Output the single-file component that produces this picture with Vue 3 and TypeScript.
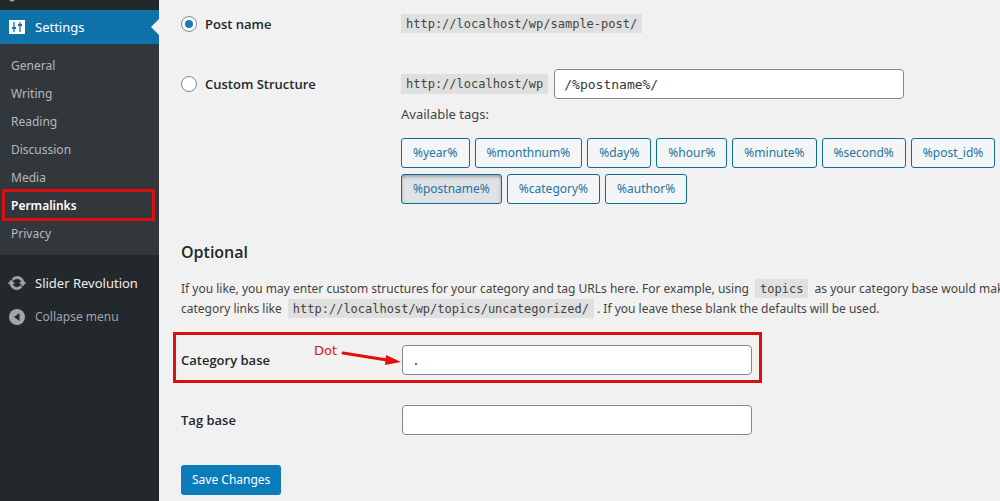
<script setup lang="ts">
import { ref } from 'vue'

const menu = ['General', 'Writing', 'Reading', 'Discussion', 'Media', 'Permalinks', 'Privacy']
const current = 'Permalinks'

const tagRows = [
  ['%year%', '%monthnum%', '%day%', '%hour%', '%minute%', '%second%', '%post_id%'],
  ['%postname%', '%category%', '%author%'],
]

const selection = ref('postname')
const structure = ref('/%postname%/')
const categoryBase = ref('.')
const tagBase = ref('')
</script>

<template>
  <div class="admin">
    <nav class="sidebar">
      <div class="tools">
        <svg width="6" height="3" viewBox="0 0 6 3"><path d="M0 0h6L4 1.500H2z" fill="#a0a5aa" /></svg>
      </div>
      <a class="top active" href="#">
        <svg class="icon" width="18" height="18" viewBox="0 0 18 18">
          <path d="M1 2h16v14H1z" fill="#fff" />
          <path d="M6 4v10M12 4v10" stroke="#1073aa" stroke-width="1.3" />
          <path d="M4 10h4M10 7h4" stroke="#1073aa" stroke-width="2.2" />
        </svg>
        <span>Settings</span>
      </a>
      <ul class="submenu">
        <li v-for="item in menu" :key="item" :class="{ current: item === current }">
          <a href="#">{{ item }}</a>
        </li>
      </ul>
      <a class="top slider" href="#">
        <svg class="icon" width="18" height="18" viewBox="1 1 18 18">
          <path
            d="M10.2 3.28c3.53 0 6.43 2.61 6.92 6h2.08l-3.5 4-3.5-4h2.32c-.45-1.97-2.21-3.45-4.32-3.45-1.45 0-2.73.71-3.54 1.78L4.95 5.66C6.23 4.2 8.11 3.28 10.2 3.28zm-.4 13.44c-3.52 0-6.43-2.61-6.92-6H.8l3.5-4 3.5 4H5.48c.45 1.97 2.21 3.45 4.32 3.45 1.45 0 2.73-.71 3.54-1.78l1.71 1.95c-1.28 1.46-3.15 2.38-5.25 2.38z"
            fill="#a0a5aa"
            stroke="#a0a5aa"
            stroke-width=".4"
          />
        </svg>
        <span>Slider Revolution</span>
      </a>
      <button class="top collapse" type="button">
        <svg class="icon" width="18" height="18" viewBox="0 0 18 18">
          <circle cx="9" cy="9" r="8" fill="#a0a5aa" />
          <path d="M11.500 5v8L6 9z" fill="#23282d" />
        </svg>
        <span>Collapse menu</span>
      </button>
    </nav>

    <main class="content">
      <form @submit.prevent>
        <div class="row">
          <label class="choice"><input v-model="selection" type="radio" name="structure" value="postname" />Post name</label>
          <div><code>http://localhost/wp/sample-post/</code></div>
        </div>
        <div class="row custom">
          <label class="choice"><input v-model="selection" type="radio" name="structure" value="custom" />Custom Structure</label>
          <div class="structure">
            <code>http://localhost/wp</code>
            <input v-model="structure" class="field" type="text" aria-label="Custom structure" />
          </div>
        </div>
        <div class="row">
          <div></div>
          <div class="tags">
            <p>Available tags:</p>
            <div v-for="(row, i) in tagRows" :key="i" class="tag-row">
              <button v-for="tag in row" :key="tag" type="button" class="tag" :class="{ pressed: structure.includes(tag) }">{{ tag }}</button>
            </div>
          </div>
        </div>

        <h2>Optional</h2>
        <p class="intro">
          If you like, you may enter custom structures for your category and tag URLs here. For example, using <code>topics</code> as your category base would make your<br />category links like <code>http://localhost/wp/topics/uncategorized/</code>. If you leave these blank the defaults will be used.
        </p>

        <div class="row base">
          <label for="category-base">Category base</label>
          <input id="category-base" v-model="categoryBase" class="field" type="text" />
          <div class="highlight"></div>
          <div class="note">
            <span>Dot</span>
            <svg width="62" height="28" viewBox="0 0 62 28">
              <path d="M3 12L47 19" stroke="#e01010" stroke-width="3" stroke-linecap="round" />
              <path d="M46 14L61 21L45 24z" fill="#e80c0c" />
            </svg>
          </div>
        </div>
        <div class="row base">
          <label for="tag-base">Tag base</label>
          <input id="tag-base" v-model="tagBase" class="field" type="text" />
        </div>
        <button class="save" type="submit">Save Changes</button>
      </form>
    </main>
  </div>
</template>

<style>
body {
  margin: 0;
  background: #f1f1f1;
}
</style>

<style scoped>
.admin {
  display: flex;
  height: 100vh;
  overflow: hidden;
  background: #f1f1f1;
  color: #444;
  font: 12px/20px "Noto Sans", "Open Sans", sans-serif;
}
.sidebar {
  flex: 0 0 159px;
  background: #23282d;
}
.tools {
  height: 10px;
  padding-left: 9px;
}
.tools svg {
  display: block;
}
.top {
  position: relative;
  display: flex;
  align-items: center;
  gap: 9px;
  box-sizing: border-box;
  width: 100%;
  height: 34px;
  padding: 0 8px;
  border: 0;
  background: none;
  color: #eee;
  font: 13px/20px "Noto Sans", "Open Sans", sans-serif;
  text-decoration: none;
  white-space: nowrap;
}
.icon {
  flex: none;
  overflow: visible;
}
.active {
  background: #0f73aa;
  color: #fff;
}
.active::after {
  content: "";
  position: absolute;
  top: 9px;
  right: 0;
  border: 8px solid transparent;
  border-left: 0;
  border-right-color: #f1f1f1;
}
.submenu {
  margin: 0 0 11px;
  padding: 8px 0 7px;
  background: #32373c;
  list-style: none;
}
.submenu li {
  position: relative;
}
.submenu a {
  display: block;
  padding: 4px 11px;
  color: #b4b9be;
  text-decoration: none;
}
.submenu .current a {
  color: #fff;
  font-weight: 600;
}
.current::after {
  content: "";
  position: absolute;
  inset: -3px 4px -1px 2px;
  border: 3px solid #d8100f;
}
.collapse {
  color: #a0a5aa;
  font-size: 12px;
}
.content {
  flex: 1;
  min-width: 0;
  padding: 9px 0 0 22px;
}
.row {
  display: grid;
  grid-template-columns: 220px 1fr;
  align-items: center;
  min-height: 30px;
}
.custom {
  margin-top: 30px;
}
label,
h2 {
  color: #23282d;
  font-family: "Open Sans", "Noto Sans", sans-serif;
  font-weight: 600;
}
label {
  font-size: 13px;
}
.choice {
  display: flex;
  align-items: center;
  gap: 8px;
}
.choice input {
  appearance: none;
  display: grid;
  place-items: center;
  width: 16px;
  height: 16px;
  margin: 0;
  border: 1px solid #7e8993;
  border-radius: 50%;
  background: #fff;
}
.choice input:checked::before {
  content: "";
  width: 8px;
  height: 8px;
  border-radius: 50%;
  background: #1e7eb0;
}
code {
  padding: 3px 5px 2px;
  background: #e0e0e0;
  font: 12px/15px "DejaVu Sans Mono", monospace;
}
.structure {
  display: flex;
  align-items: center;
  gap: 6px;
}
.field {
  box-sizing: border-box;
  width: 350px;
  height: 30px;
  padding: 0 9px;
  border: 1px solid #7e8993;
  border-radius: 4px;
  background: #fff;
  color: #32373c;
  font: 13px/20px "DejaVu Sans Mono", monospace;
}
.tags p {
  margin: 5px 0 14px;
  font-size: 13px;
}
.tag-row {
  display: flex;
  gap: 5px;
  margin-bottom: 6px;
}
.tag {
  height: 30px;
  padding: 0 11px;
  border: 1px solid #0f6d92;
  border-radius: 3px;
  background: #f3f5f6;
  color: #2674a0;
  font: inherit;
}
.pressed {
  background: #dfe3e6;
  box-shadow: inset 0 2px 5px -2px #52616b;
}
h2 {
  margin: 32px 0 17px;
  font-size: 16px;
  line-height: 20px;
}
.intro {
  margin: 0 0 26px;
  white-space: nowrap;
}
.intro code {
  margin: 0 3px;
}
.base {
  position: relative;
  margin-bottom: 30px;
}
.base .field {
  margin-left: 1px;
}
.highlight {
  position: absolute;
  top: -13px;
  left: -8px;
  box-sizing: border-box;
  width: 589px;
  height: 51px;
  border: 3px solid #d8100f;
}
.note {
  position: absolute;
  top: -4px;
  left: 133px;
  display: flex;
  gap: 3px;
  color: #d81818;
  font: 13px/20px "DejaVu Sans", sans-serif;
}
.save {
  height: 30px;
  padding: 0 11px;
  border: 0;
  border-radius: 3px;
  background: #0a7cba;
  color: #fff;
  font: inherit;
}
</style>
